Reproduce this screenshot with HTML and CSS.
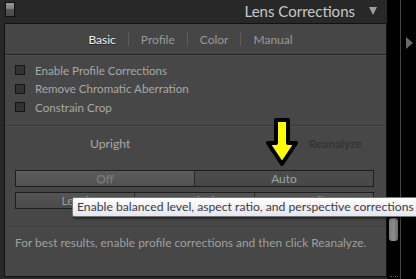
FILE: index.html
```html
<!DOCTYPE html>
<html lang="en">
<head>
    <meta charset="UTF-8">
    <title>Lens Corrections</title>
    <link rel="stylesheet" href="styles.css">
</head>
<body>
    <div class="main">
        <div class="header">
            <div class="gadget"></div>
            <div class="title">Lens Corrections <span class="collapse"></span></div>
        </div>
        <div class="panel">
            <div class="tabs">
                <span class="tab active">Basic</span>
                <span class="sep"></span>
                <span class="tab">Profile</span>
                <span class="sep"></span>
                <span class="tab">Color</span>
                <span class="sep"></span>
                <span class="tab">Manual</span>
            </div>
            <div class="content">
                <div class="checks">
                    <label class="check"><span class="box"></span>Enable Profile Corrections</label>
                    <label class="check"><span class="box"></span>Remove Chromatic Aberration</label>
                    <label class="check"><span class="box"></span>Constrain Crop</label>
                </div>
                <div class="rule"></div>
                <div class="upright">
                    <span class="upright-label">Upright</span>
                    <span class="reanalyze">Reanalyze</span>
                </div>
                <div class="btn-row">
                    <span class="btn selected">Off</span>
                    <span class="btn auto">Auto</span>
                </div>
                <div class="btn-row three">
                    <span class="btn">Level</span>
                    <span class="btn">Vertical</span>
                    <span class="btn">Full</span>
                </div>
                <div class="rule lower"></div>
                <p class="hint">For best results, enable profile corrections and then click Reanalyze.</p>
            </div>
            <div class="tooltip">Enable balanced level, aspect ratio, and perspective corrections</div>
            <svg class="arrow" width="40" height="52" viewBox="0 0 40 52">
                <path d="M12 3 H24 V26 H32 L18 47 L4 26 H12 Z" fill="#ffff00" stroke="#000" stroke-width="4" stroke-linejoin="round"/>
            </svg>
        </div>
    </div>
    <div class="side">
        <div class="track"><div class="thumb"></div><div class="grip"></div></div>
        <div class="edge"><span class="expand"></span></div>
    </div>
</body>
</html>
```

FILE: styles.css
```css
body {
    margin: 0;
    width: 416px;
    height: 279px;
    overflow: hidden;
    display: flex;
    background: #282828;
    font-family: Lato, "Open Sans", sans-serif;
}
.main {
    width: 383px;
    padding-left: 4px;
    position: relative;
}
.header {
    height: 23px;
    display: flex;
    align-items: flex-start;
    justify-content: space-between;
}
.gadget {
    width: 8px;
    height: 13px;
    margin: 2px 0 0 1px;
    border: 1px solid #111;
    background: linear-gradient(#9a9a9a, #7a7a7a 50%, #555 50%, #4a4a4a);
}
.title {
    color: #c8c8c8;
    font-size: 15px;
    line-height: 22px;
    display: flex;
    align-items: center;
    margin-right: 10px;
}
.collapse {
    width: 0;
    height: 0;
    margin-left: 14px;
    border-left: 4px solid transparent;
    border-right: 4px solid transparent;
    border-top: 8px solid #9c9c9c;
}
.panel {
    position: relative;
    height: 252px;
    border: 1px solid #121212;
    background: #474747;
}
.tabs {
    height: 30px;
    display: flex;
    align-items: center;
    justify-content: center;
    gap: 12px;
    background: #464646;
    border-bottom: 1px solid #222;
    font-size: 12px;
    padding-right: 10px;
}
.tab {
    color: #9a9a9a;
}
.tab.active {
    color: #f2f2f2;
    text-shadow: 0 1px 0 #222;
}
.sep {
    width: 1px;
    height: 14px;
    background: #5e5e5e;
}
.content {
    padding: 5px 10px 0 10px;
    border-top: 1px solid #505050;
}
.check {
    display: flex;
    align-items: center;
    height: 18.5px;
    font-size: 11.6px;
    color: #a8a8a8;
}
.box {
    width: 8px;
    height: 8px;
    border: 1px solid #151515;
    background: #323232;
    margin-right: 10px;
}
.rule {
    height: 1px;
    background: #3a3a3a;
    border-bottom: 1px solid #4e4e4e;
    margin: 8px -10px 0 -10px;
}
.upright {
    height: 34px;
    display: flex;
    align-items: center;
    justify-content: space-between;
    padding: 0 14px 0 75px;
    font-size: 12.2px;
}
.upright-label {
    color: #a9a9a9;
}
.reanalyze {
    color: #2f2f2f;
}
.btn-row {
    display: flex;
    margin-top: 9px;
    width: 357px;
    border: 1px solid #1e1e1e;
}
.btn-row.three {
    margin-top: 5px;
}
.btn {
    flex: 1;
    height: 15px;
    line-height: 15px;
    text-align: center;
    font-size: 12px;
    color: #9a9a9a;
    background: linear-gradient(#555, #4b4b4b);
    border-left: 1px solid #2a2a2a;
}
.btn:first-child {
    border-left: none;
}
.btn.selected {
    color: #7c7c7c;
    background: linear-gradient(#5c5c5c, #525252);
    text-shadow: 0 1px 0 #666;
}
.btn.auto {
    color: #9aa4ad;
    background: linear-gradient(#4c4c4c, #474747);
}
.rule.lower {
    margin-top: 17px;
}
.hint {
    margin: 7px 0 0 0;
    font-size: 11.9px;
    color: #a0a0a0;
    line-height: 16px;
    white-space: nowrap;
}
.tooltip {
    position: absolute;
    left: 67px;
    top: 173px;
    width: max-content;
    height: 18px;
    padding: 0 4px;
    border: 1px solid #767676;
    border-radius: 2px;
    background: linear-gradient(#ffffff, #e4e5f0);
    box-shadow: 1px 2px 2px rgba(0, 0, 0, 0.45);
    color: #3c3c3c;
    font-size: 12.2px;
    line-height: 18px;
    white-space: nowrap;
}
.arrow {
    position: absolute;
    left: 259px;
    top: 93px;
}
.side {
    flex: 1;
    display: flex;
    background: #000;
}
.track {
    width: 13px;
    border-right: 1px solid #444;
    display: flex;
    flex-direction: column;
    align-items: center;
}
.thumb {
    width: 9px;
    height: 23px;
    margin-top: 218px;
    border-radius: 3px;
    background: linear-gradient(90deg, #7a7a7a, #8c8c8c, #6a6a6a);
}
.grip {
    width: 8px;
    height: 2px;
    margin-top: 35px;
    border-top: 1px dotted #555;
}
.edge {
    flex: 1;
    padding-top: 37px;
    padding-left: 5px;
}
.expand {
    display: block;
    width: 0;
    height: 0;
    border-top: 6px solid transparent;
    border-bottom: 6px solid transparent;
    border-left: 7px solid #6a6a6a;
}
```
